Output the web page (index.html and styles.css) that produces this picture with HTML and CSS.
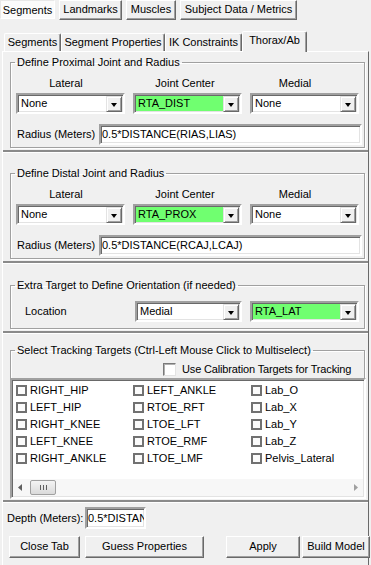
FILE: index.html
```html
<!DOCTYPE html>
<html lang="en">
<head>
    <meta charset="UTF-8">
    <title>Thorax/Ab</title>
    <link rel="stylesheet" href="styles.css">
</head>
<body>
    <div class="toptabs">
        <div class="ttab sel t1">Segments</div>
        <div class="ttab t2">Landmarks</div>
        <div class="ttab t3">Muscles</div>
        <div class="ttab t4">Subject Data / Metrics</div>
    </div>

    <div class="subtabs">
        <div class="stab s1">Segments</div>
        <div class="stab s2">Segment Properties</div>
        <div class="stab s3">IK Constraints</div>
        <div class="stab sel s4">Thorax/Ab</div>
    </div>

    <div class="page">
        <!-- proximal -->
        <div class="pane p1">
            <fieldset class="grp">
                <legend>Define Proximal Joint and Radius</legend>
                <div class="labels">
                    <span>Lateral</span><span>Joint Center</span><span>Medial</span>
                </div>
                <div class="combos">
                    <div class="combo"><span>None</span><i class="drop"></i></div>
                    <div class="combo green"><span>RTA_DIST</span><i class="drop"></i></div>
                    <div class="combo"><span>None</span><i class="drop"></i></div>
                </div>
                <div class="radius">
                    <span class="rlbl">Radius (Meters)</span>
                    <div class="edit">0.5*DISTANCE(RIAS,LIAS)</div>
                </div>
            </fieldset>
        </div>

        <!-- distal -->
        <div class="pane p2">
            <fieldset class="grp">
                <legend>Define Distal Joint and Radius</legend>
                <div class="labels">
                    <span>Lateral</span><span>Joint Center</span><span>Medial</span>
                </div>
                <div class="combos">
                    <div class="combo"><span>None</span><i class="drop"></i></div>
                    <div class="combo green"><span>RTA_PROX</span><i class="drop"></i></div>
                    <div class="combo"><span>None</span><i class="drop"></i></div>
                </div>
                <div class="radius">
                    <span class="rlbl">Radius (Meters)</span>
                    <div class="edit">0.5*DISTANCE(RCAJ,LCAJ)</div>
                </div>
            </fieldset>
        </div>

        <!-- orientation -->
        <div class="pane p3">
            <fieldset class="grp g3">
                <legend>Extra Target to Define Orientation (if needed)</legend>
                <div class="loc">
                    <span class="loclbl">Location</span>
                    <div class="combo narrow"><span>Medial</span><i class="drop"></i></div>
                    <div class="combo green"><span>RTA_LAT</span><i class="drop"></i></div>
                </div>
            </fieldset>
        </div>

        <!-- tracking -->
        <div class="pane p4">
            <fieldset class="grp g4">
                <legend>Select Tracking Targets (Ctrl-Left Mouse Click to Multiselect)</legend>
                <div class="calib"><i class="cbox"></i>Use Calibration Targets for Tracking</div>
            </fieldset>
            <div class="list">
                <div class="items">
                    <div class="item"><i class="chk"></i>RIGHT_HIP</div>
                    <div class="item"><i class="chk"></i>LEFT_ANKLE</div>
                    <div class="item"><i class="chk"></i>Lab_O</div>
                    <div class="item"><i class="chk"></i>LEFT_HIP</div>
                    <div class="item"><i class="chk"></i>RTOE_RFT</div>
                    <div class="item"><i class="chk"></i>Lab_X</div>
                    <div class="item"><i class="chk"></i>RIGHT_KNEE</div>
                    <div class="item"><i class="chk"></i>LTOE_LFT</div>
                    <div class="item"><i class="chk"></i>Lab_Y</div>
                    <div class="item"><i class="chk"></i>LEFT_KNEE</div>
                    <div class="item"><i class="chk"></i>RTOE_RMF</div>
                    <div class="item"><i class="chk"></i>Lab_Z</div>
                    <div class="item"><i class="chk"></i>RIGHT_ANKLE</div>
                    <div class="item"><i class="chk"></i>LTOE_LMF</div>
                    <div class="item"><i class="chk"></i>Pelvis_Lateral</div>
                </div>
                <div class="hscroll">
                    <svg class="arr" width="4" height="7" viewBox="0 0 4 7"><path d="M4 0 L0 3.5 L4 7 Z" fill="#606060"/></svg>
                    <div class="thumb"><svg width="9" height="5" viewBox="0 0 9 5"><path d="M1.5 0v5M4.5 0v5M7.5 0v5" stroke="#606060" stroke-width="1"/></svg></div>
                    <span class="track"></span>
                    <svg class="arr" width="4" height="7" viewBox="0 0 4 7"><path d="M0 0 L4 3.5 L0 7 Z" fill="#a0a0a0"/></svg>
                </div>
            </div>
        </div>

        <div class="depth">
            <span class="dlbl">Depth (Meters):</span>
            <div class="edit short">0.5*DISTANCE</div>
        </div>

        <div class="buttons">
            <div class="btn w-close">Close Tab</div>
            <div class="btn w-guess">Guess Properties</div>
            <span class="spacer"></span>
            <div class="btn w-apply">Apply</div>
            <div class="btn w-build">Build Model</div>
        </div>
    </div>
</body>
</html>
```

FILE: styles.css
```css
body {
    margin: 0;
    width: 371px;
    height: 565px;
    overflow: hidden;
    background: #f0f0f0;
    color: #000;
    font-family: "Liberation Sans", Arial, sans-serif;
    font-size: 11px;
    line-height: 13px;
    white-space: nowrap;
}

/* top button-style tabs */
.toptabs {
    display: flex;
    gap: 4px;
    height: 20px;
}

.ttab {
    box-sizing: border-box;
    height: 20px;
    line-height: 17px;
    text-align: center;
    border: 1px solid;
    border-color: #fff #696969 #696969 #fff;
    box-shadow: inset -1px -1px #a0a0a0;
}

.ttab.sel {
    height: 19px;
    background: #fbfbfb;
    border-color: #e8e8e8 #fff #fff #e8e8e8;
    box-shadow: none;
    line-height: 19px;
}

.t1 { width: 55px; }
.t2 { width: 63px; }
.t3 { width: 50px; }
.t4 { width: 117px; }

/* sub tabs */
.subtabs {
    display: flex;
    align-items: flex-end;
    height: 21px;
    margin-top: 10px;
    padding-left: 4px;
}

.stab {
    box-sizing: border-box;
    height: 18px;
    line-height: 16px;
    text-align: center;
    border: 1px solid;
    border-bottom: 0;
    border-color: #fff #696969 transparent #fff;
    border-radius: 2px 2px 0 0;
    box-shadow: inset -1px 0 #a0a0a0;
}

.s1 { width: 57px; }
.s2 { width: 104px; }
.s3 { width: 77px; }
.s4 { width: 65px; }

.stab.sel {
    height: 21px;
    line-height: 17px;
    position: relative;
    top: 1px;
    background: #f0f0f0;
    z-index: 1;
}

.page {
    box-sizing: border-box;
    margin-left: 2px;
    width: 367px;
    height: 520px;
    border: 1px solid;
    border-color: #fff #696969 #696969 #fff;
}

.pane {
    padding: 0 3px 2px 7px;
    border-bottom: 2px solid #8a8a8a;
    box-shadow: 0 1px #fff;
    margin-bottom: 1px;
}

.p1 { padding-top: 4px; }
.p2 { padding-top: 14px; }
.p3 { padding-top: 15px; }
.p4 { padding-top: 10px; padding-bottom: 1px; }

/* group boxes */
.grp {
    margin: 0;
    padding: 0 2px 2px 5px;
    border: 1px solid #a0a0a0;
    box-shadow: inset 1px 1px #fff, 1px 1px #fff;
}

.grp legend {
    padding: 0 2px;
    margin-left: -1px;
    line-height: 13px;
}

.labels {
    display: grid;
    grid-template-columns: 100px 138px 82px;
    text-align: center;
    margin-top: 8px;
}

.combos {
    display: flex;
    gap: 8px;
    margin-top: 3px;
}

.combo {
    box-sizing: border-box;
    width: 109px;
    height: 21px;
    display: flex;
    align-items: center;
    background: #fff;
    border: 2px solid;
    border-color: #a0a0a0 #fff #fff #a0a0a0;
    box-shadow: inset 1px 1px #696969, inset -1px -1px #e3e3e3;
    padding: 0 1px 0 2px;
}

.combo.green {
    background: #70ff70;
}

.combo.narrow {
    width: 107px;
    margin-right: 8px;
}

.combo span {
    flex: 1;
    padding-left: 1px;
}

.drop {
    box-sizing: border-box;
    width: 16px;
    height: 16px;
    margin-top: 1px;
    background: #f0f0f0;
    border: 1px solid;
    border-color: #e3e3e3 #696969 #696969 #e3e3e3;
    box-shadow: inset 1px 1px #fff, inset -1px -1px #a0a0a0;
    display: flex;
    align-items: center;
    justify-content: center;
}

.drop::after {
    content: "";
    border-left: 3.5px solid transparent;
    border-right: 3.5px solid transparent;
    border-top: 4px solid #000;
    margin-top: 1px;
}

.radius {
    display: flex;
    align-items: center;
    margin-top: 10px;
}

.rlbl {
    width: 82px;
    margin-left: 1px;
}

.edit {
    box-sizing: border-box;
    height: 21px;
    line-height: 17px;
    padding-left: 1px;
    background: #fff;
    border: 2px solid;
    border-color: #a0a0a0 #fff #fff #a0a0a0;
    box-shadow: inset 1px 1px #696969, inset -1px -1px #e3e3e3;
    flex: 1;
    overflow: hidden;
}

/* orientation */
.g3 { padding-bottom: 6px; }

.loc {
    display: flex;
    align-items: center;
    margin-top: 9px;
}

.loclbl {
    width: 110px;
    margin-left: 9px;
}

/* tracking */
.g4 { padding-bottom: 8px; }

.calib {
    display: flex;
    align-items: center;
    gap: 6px;
    margin-top: 6px;
    padding-left: 147px;
    letter-spacing: -0.15px;
}

.cbox {
    box-sizing: border-box;
    width: 13px;
    height: 13px;
    background: #fff;
    border: 1px solid;
    border-color: #7a7a7a #e3e3e3 #e3e3e3 #7a7a7a;
    box-shadow: inset 1px 1px #b0b0b0;
}

.chk {
    box-sizing: border-box;
    width: 11px;
    height: 11px;
    border: 2px solid #717171;
    background: #fbfbfb;
}

.list {
    margin-top: -7px;
    width: 356px;
    height: 121px;
    box-sizing: border-box;
    background: #fff;
    border: 2px solid;
    border-color: #a0a0a0 #fff #fff #a0a0a0;
    box-shadow: inset 1px 1px #696969, inset -1px -1px #e3e3e3;
    position: relative;
    display: flex;
    flex-direction: column;
}

.items {
    flex: 1;
    display: grid;
    grid-template-columns: 117px 118px 1fr;
    grid-auto-rows: 17px;
    padding: 2px 0 0 4px;
}

.item {
    display: flex;
    align-items: center;
    gap: 3px;
}

.hscroll {
    height: 17px;
    margin: 0 1px 1px 1px;
    background: #f7f7f7;
    display: flex;
    align-items: center;
    padding: 0 5px 0 5px;
}

.hscroll .thumb {
    box-sizing: border-box;
    margin-left: 8px;
    width: 26px;
    height: 15px;
    background: linear-gradient(#f4f4f4, #dadada);
    border: 1px solid #a0a0a0;
    border-radius: 2px;
    display: flex;
    align-items: center;
    justify-content: center;
}

.hscroll .track {
    flex: 1;
}

/* bottom */
.depth {
    display: flex;
    align-items: center;
    margin: 5px 0 0 4px;
}

.dlbl {
    width: 78px;
}

.edit.short {
    flex: none;
    width: 61px;
    height: 22px;
    line-height: 18px;
}

.buttons {
    display: flex;
    gap: 5px;
    width: 361px;
    margin: 7px 0 0 6px;
}

.btn {
    box-sizing: border-box;
    height: 22px;
    line-height: 19px;
    text-align: center;
    border: 1px solid;
    border-color: #fff #696969 #696969 #fff;
    box-shadow: inset -1px -1px #a0a0a0;
}

.w-close { width: 71px; }
.w-guess { width: 119px; }
.w-apply { width: 74px; }
.w-build { width: 68px; margin-left: -3px; }

.spacer {
    flex: 1;
}
```
